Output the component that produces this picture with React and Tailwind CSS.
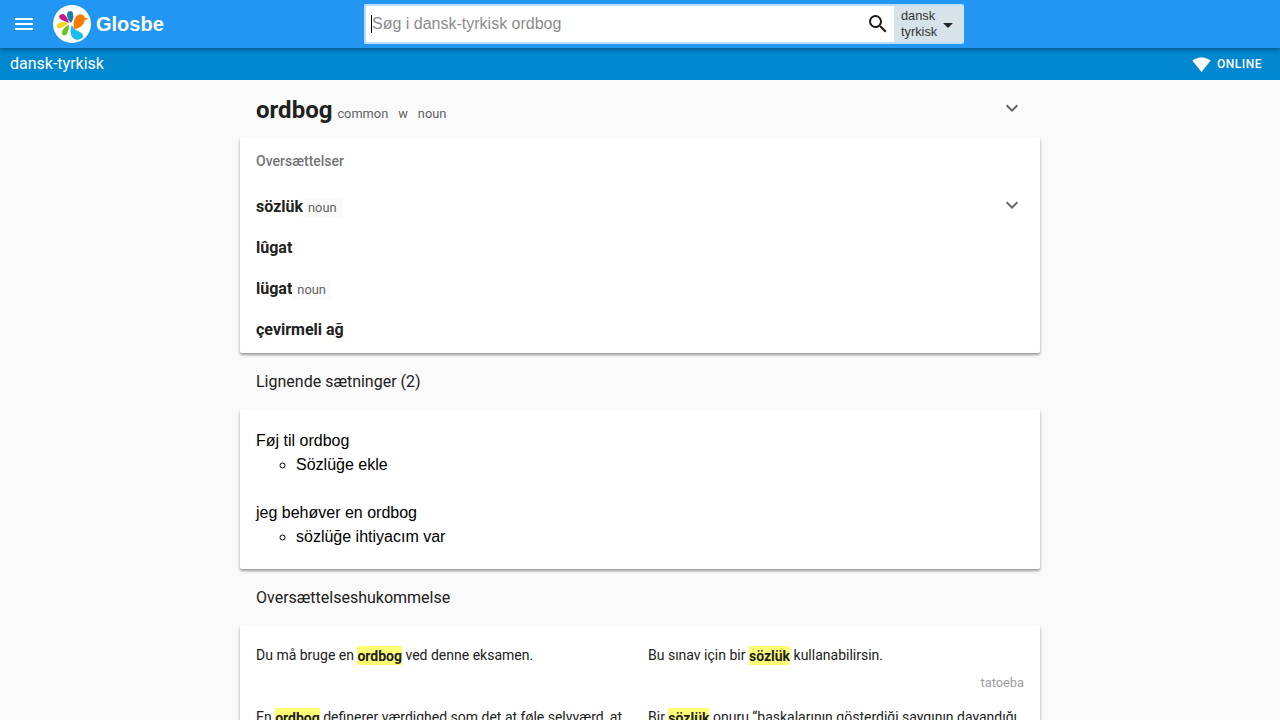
import { MdMenu, MdSearch, MdExpandMore, MdArrowDropDown, MdSignalWifi4Bar } from 'react-icons/md';

const translations = [
  { word: 'sözlük', tag: 'noun', expand: true },
  { word: 'lûgat' },
  { word: 'lügat', tag: 'noun' },
  { word: 'çevirmeli ağ' },
];

const similar = [
  { da: 'Føj til ordbog', tr: 'Sözlüğe ekle' },
  { da: 'jeg behøver en ordbog', tr: 'sözlüğe ihtiyacım var' },
];

function Mark({ children }) {
  return <span className="bg-[#ffff76] font-bold py-[1.5px]">{children}</span>;
}

function Logo() {
  return (
    <svg viewBox="0 0 38 38" className="w-[38px] h-[38px]">
      <circle cx="19" cy="19" r="19" fill="#fff" />
      <path d="M18 18C14 14 13 9 15 7C17 5 20 6 20 9C21 12 20 15 18 18z" fill="#1b7fa8" />
      <path d="M16 18C12 16 7 15 6 12C6 10 8 9 10 9C13 10 15 14 16 18z" fill="#c2188b" />
      <path d="M15 18C11 16 6 17 4 20C3 22 5 24 7 23C10 23 13 20 15 18z" fill="#f7d417" />
      <path d="M16 20C12 21 9 25 9 28C9 31 12 31 14 29C15 27 16 24 16 20z" fill="#6cc024" />
      <path d="M19 20C17 24 17 30 20 33C23 36 28 35 30 32C31 29 27 27 25 26C22 25 20 23 19 20z" fill="#19bdf0" />
      <path d="M21 24C20 18 21 12 25 10C28 8 31 10 32 13L36 13.5L31.5 15.5C31 20 26 24 21 24z" fill="#f57c00" />
    </svg>
  );
}

function Card({ children, className }) {
  return <div className={`bg-white rounded-[2px] shadow-[0_2px_3px_rgba(0,0,0,0.4)] ${className}`}>{children}</div>;
}

export default function App() {
  return (
    <div className="h-screen overflow-hidden bg-[#fafafa] text-[#212121] font-['Roboto',sans-serif]">
      <header className="relative z-10 h-12 bg-[#2196f3] flex items-center shadow-[0_2px_4px_rgba(0,0,0,0.35)]">
        <MdMenu className="ml-3 text-white" size={24} />
        <div className="ml-[17px]"><Logo /></div>
        <span className="ml-[5px] w-[67px] text-white text-[20px] font-bold font-['Liberation_Sans',sans-serif]">Glosbe</span>
        <div className="ml-[201px] w-[600px] h-10 flex bg-[#d6e4ea] rounded-[2px] border-2 border-[#bbdefb] border-r-0">
          <div className="flex-1 bg-white flex items-center pl-[5px] text-[16px] text-[#8c8c8c] font-['Liberation_Sans',sans-serif]">
            <span className="w-px h-[18px] bg-black" />
            <span>Søg i dansk-tyrkisk ordbog</span>
          </div>
          <div className="w-[32px] bg-white flex items-center justify-center">
            <MdSearch className="text-[#1a1a1a]" size={24} />
          </div>
          <div className="w-[70px] flex items-center pl-[7px] text-[12.8px] leading-4 text-[#333] font-['Liberation_Sans',sans-serif]">
            <div className="w-[35px]">dansk<br />tyrkisk</div>
            <MdArrowDropDown className="mt-[2px] text-[#222]" size={24} />
          </div>
        </div>
      </header>

      <div className="h-8 bg-[#0288d1] flex items-center justify-between pl-[10px] pr-[18px] text-white">
        <span className="text-[16px]">dansk-tyrkisk</span>
        <div className="flex items-center gap-[6px] text-[12px] font-medium tracking-[0.5px]">
          <MdSignalWifi4Bar size={19} />
          <span>ONLINE</span>
        </div>
      </div>

      <main className="w-[800px] mx-auto">
        <div className="h-[57px] flex items-center px-4">
          <h1 className="text-[24px] font-bold text-[#212121] mt-[2px]">ordbog</h1>
          <span className="ml-[5px] mt-[11px] text-[12.8px] text-[#616161]">common</span>
          <span className="ml-[10px] mt-[11px] text-[12.8px] text-[#616161]">w</span>
          <span className="ml-[10px] mt-[11px] text-[12.8px] text-[#616161]">noun</span>
          <MdExpandMore className="ml-auto -mt-[2px] text-[#666]" size={24} />
        </div>

        <Card className="h-[216px] px-4 pt-[16px]">
          <div className="text-[14px] font-medium text-[#757575] leading-4">Oversættelser</div>
          <div className="mt-[17px]">
            {translations.map((t) => (
              <div key={t.word} className="h-[41px] flex items-center">
                <span className="text-[16px] font-bold">{t.word}</span>
                {t.tag && <span className="mt-[3px] px-[5px] bg-[#fafafa] text-[12.8px] leading-5 text-[#616161]">{t.tag}</span>}
                {t.expand && <MdExpandMore className="ml-auto -mt-[4px] text-[#666]" size={24} />}
              </div>
            ))}
          </div>
        </Card>

        <h2 className="h-14 flex items-center px-4 pt-[2px] text-[16px] text-[#212121]">Lignende sætninger (2)</h2>

        <Card className="h-[160px] px-4 pt-[20px] pb-4 text-[16px] leading-6 text-black font-['Liberation_Sans',sans-serif]">
          {similar.map((s) => (
            <div key={s.da} className="mb-6">
              <div>{s.da}</div>
              <ul className="pl-10 list-[circle]"><li>{s.tr}</li></ul>
            </div>
          ))}
        </Card>

        <h2 className="h-14 flex items-center px-4 pt-[2px] text-[16px] text-[#212121]">Oversættelseshukommelse</h2>

        <Card className="px-4 pt-[20px] pb-6 text-[14px] leading-5 text-[#212121]">
          <div className="grid grid-cols-2">
            <div className="pr-2">Du må bruge en <Mark>ordbog</Mark> ved denne eksamen.</div>
            <div className="pl-2">Bu sınav için bir <Mark>sözlük</Mark> kullanabilirsin.</div>
          </div>
          <div className="mt-2 text-right text-[12.8px] text-[#9e9e9e]">tatoeba</div>
          <div className="mt-[14px] grid grid-cols-2">
            <div className="pr-2">En <Mark>ordbog</Mark> definerer værdighed som det at føle selvværd, at</div>
            <div className="pl-2">Bir <Mark>sözlük</Mark> onuru “başkalarının gösterdiği saygının dayandığı</div>
          </div>
        </Card>
      </main>
    </div>
  );
}
